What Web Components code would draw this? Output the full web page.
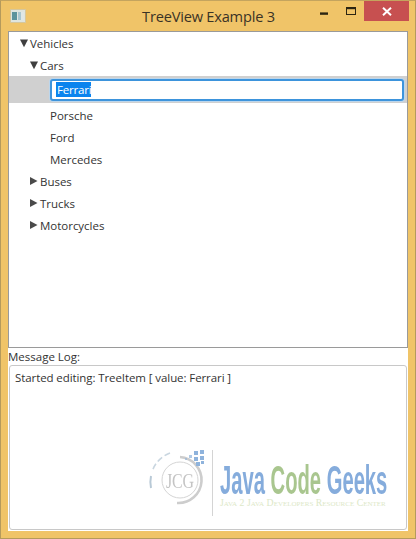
<!DOCTYPE html>
<html><head><meta charset="utf-8">
<style>
html,body{margin:0;padding:0;background:#f0c468;}
body{width:416px;height:539px;overflow:hidden;font-family:"Open Sans","Noto Sans",sans-serif;}
</style></head><body>
<fx-window caption="TreeView Example 3">
  <fx-tree>
    <fx-row level="0" arrow="down">Vehicles</fx-row>
    <fx-row level="1" arrow="down">Cars</fx-row>
    <fx-edit-row level="2" value="Ferrari"></fx-edit-row>
    <fx-row level="2">Porsche</fx-row>
    <fx-row level="2">Ford</fx-row>
    <fx-row level="2">Mercedes</fx-row>
    <fx-row level="1" arrow="right">Buses</fx-row>
    <fx-row level="1" arrow="right">Trucks</fx-row>
    <fx-row level="1" arrow="right">Motorcycles</fx-row>
  </fx-tree>
  <fx-log label="Message Log:" text="Started editing: TreeItem [ value: Ferrari ]"></fx-log>
</fx-window>
<script>
function def(name, html, init){
  customElements.define(name, class extends HTMLElement{
    connectedCallback(){
      if(this.shadowRoot) return;
      const r=this.attachShadow({mode:'open'});
      r.innerHTML=html;
      if(init) init.call(this,r);
    }
  });
}
def('fx-window',`<style>
:host{display:flex;flex-direction:column;width:416px;height:539px;box-sizing:border-box;background:#f0c468;border:1px solid #b59a5c;border-top-color:#c4a45e;}
.bar{display:grid;grid-template-columns:1fr auto 1fr;height:30px;flex:none;align-items:start;}
.icon{margin:8px 0 0 9px;display:block;}
.title{font-size:14.6px;letter-spacing:-.2px;line-height:30px;color:#3a3326;white-space:nowrap;padding-left:1px;}
.ctl{display:flex;justify-content:flex-end;margin-right:6px;}
.b{height:20px;display:flex;align-items:center;justify-content:center;}
.b.min{width:29px}.b.min svg{margin-top:5px}.b.max{width:26px}
.close{background:#c75050;width:45px;}
.body{flex:1;display:flex;flex-direction:column;margin:0 7px 7px 7px;background:#fff;min-height:0;}
</style>
<div class="bar">
 <div><svg class="icon" width="16" height="14" viewBox="0 0 16 14"><rect x=".5" y=".5" width="15" height="13" fill="#dfe5df" stroke="#d6c79c"/><rect x="2" y="3" width="5" height="8" fill="#5c939c"/><rect x="8" y="3" width="3" height="8" fill="#a9c6cf"/><rect x="11" y="3" width="3" height="8" fill="#dfe7e6"/></svg></div>
 <div class="title" id="t"></div>
 <div class="ctl">
  <div class="b min"><svg width="10" height="3"><rect width="8" height="2.4" y=".4" x="1" fill="#2c2512"/></svg></div>
  <div class="b max"><svg width="11" height="9" viewBox="0 0 11 9"><rect x=".5" y=".5" width="9" height="7" fill="none" stroke="#2c2512"/><rect x="0" y="0" width="10" height="2.2" fill="#2c2512"/></svg></div>
  <div class="b close"><svg width="10" height="9" viewBox="0 0 10 9"><path d="M1 .8 L9 8.2 M9 .8 L1 8.2" stroke="#fff" stroke-width="2"/></svg></div>
 </div>
</div>
<div class="body"><slot></slot></div>`,function(r){r.getElementById('t').textContent=this.getAttribute('caption');});
def('fx-tree',`<style>
:host{display:block;height:317px;flex:none;box-sizing:border-box;border:1px solid #9a9a9a;background:#fff;color:#333;}
</style><slot></slot>`);
const arrow=a=>a==='down'?'<svg width="10" height="9" viewBox="0 0 10 9"><path d="M0 .5H8L4 8.2Z" fill="#3f3f3f"/></svg>':a==='right'?'<svg width="10" height="10" viewBox="0 0 10 10"><path d="M0 1V9L7.5 5Z" fill="#4a4a4a"/></svg>':'';
def('fx-row',`<style>
:host{display:flex;height:22px;align-items:center;font-size:11.5px;letter-spacing:-.02px;color:#333;}
.a{width:10px;height:10px;display:flex;align-items:center;justify-content:center;flex:none;}
.in{display:flex;align-items:center;}
</style><div class="in" id="i"><div class="a" id="a"></div><slot></slot></div>`,function(r){
 const l=+this.getAttribute('level');
 r.getElementById('i').style.marginLeft=(11+l*10)+'px';
 r.getElementById('a').innerHTML=arrow(this.getAttribute('arrow'));
});
def('fx-edit-row',`<style>
:host{display:flex;height:27px;margin:0 0 1px;align-items:center;background:#d0d0d0;padding-left:41px;padding-right:3px;}
.f{flex:1;height:22px;box-sizing:border-box;border:2px solid #3d94dc;border-radius:3px;background:#fff;display:flex;align-items:center;padding-left:4px;font-size:11.5px;letter-spacing:-.2px;box-shadow:0 0 0 1px #bcd6ec;}
.s{background:#0a84ee;color:#fff;line-height:15px;height:15px;padding:0 0 0 1px;}
</style><div class="f"><span class="s" id="v"></span></div>`,function(r){r.getElementById('v').textContent=this.getAttribute('value');});
def('fx-log',`<style>
:host{display:flex;flex-direction:column;flex:1;min-height:0;background:#fff;color:#333;font-size:11.5px;}
.l{height:17px;line-height:17px;flex:none;}
.a{flex:1;box-sizing:border-box;margin:0 1px 1px 1px;border:1px solid #c8c8c8;border-radius:3px;background:#fff;padding:4px 5px;line-height:16px;letter-spacing:-.09px;position:relative;overflow:hidden;}
.logo{position:absolute;left:136px;top:80px;width:250px;height:76px;}
.jcg{position:absolute;left:0;top:0;filter:blur(.3px);}
.sep{position:absolute;left:66px;top:4px;width:1px;height:66px;background:#d4d4d4;}
.w{position:absolute;left:74px;top:19px;white-space:nowrap;font:bold 26px/20px "Liberation Sans",sans-serif;letter-spacing:0;transform-origin:0 0;transform:scale(.777,1.55);color:#85acdc;filter:blur(.3px);}
.w b{color:#a9c68f;font-weight:bold;}
.sub{position:absolute;left:74px;top:51px;white-space:nowrap;font:small-caps 9.8px/11px "Liberation Serif",serif;color:#dde8c8;letter-spacing:0;}
</style><div class="l" id="l"></div><div class="a"><span id="t"></span>
<div class="logo">
 <svg class="jcg" width="66" height="66" viewBox="0 0 66 66">
  <circle cx="34" cy="34" r="18" fill="none" stroke="#d4d4d4" stroke-width="1"/>
  <path d="M34 11 A23 23 0 0 1 31 57" fill="none" stroke="#cdcdcd" stroke-width="2.6"/>
  <path d="M24 7 A29 29 0 0 0 6 26" fill="none" stroke="#c9d6e0" stroke-width="1.6" stroke-dasharray="6 3"/>
  <path d="M5 30 A29 29 0 0 0 5 42" fill="none" stroke="#b8c9d6" stroke-width="2"/>
  <g fill="#8fb3dc"><rect x="48" y="5" width="4" height="4"/><rect x="54" y="4" width="4" height="4"/><rect x="43" y="9" width="3" height="3" opacity=".7"/><rect x="48" y="11" width="4" height="4"/><rect x="54" y="10" width="4" height="4"/><rect x="50" y="16" width="4" height="4"/><rect x="55" y="15" width="3" height="3"/><rect x="39" y="12" width="2" height="2" opacity=".6"/></g>
  <text x="20" y="42" font-family="Liberation Serif" font-size="22" fill="#c4c4c4" textLength="28" lengthAdjust="spacingAndGlyphs">JCG</text>
 </svg>
 <div class="sep"></div>
 <div class="w">Java <b>Code</b> Geeks</div>
 <div class="sub">Java 2 Java Developers Resource Center</div>
</div>
</div>`,function(r){r.getElementById('l').textContent=this.getAttribute('label');r.getElementById('t').textContent=this.getAttribute('text');});
</script>
</body></html>
